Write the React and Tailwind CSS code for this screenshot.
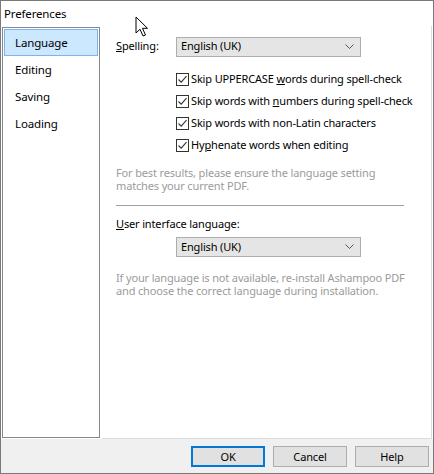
import React from "react";

const font = { fontFamily: '"Noto Sans", "Segoe UI", sans-serif' };

const Check = () => (
  <span className="w-[13px] h-[13px] border border-[#333333] bg-white flex items-center justify-center shrink-0">
    <svg width="11" height="11" viewBox="0 0 11 11">
      <path d="M1.5 5.5 L4.2 8.2 L9.5 2.2" fill="none" stroke="#333" strokeWidth="1.1" />
    </svg>
  </span>
);

const Select = ({ value }) => (
  <div className="w-[185px] h-[20px] border border-[#adadad] bg-[#e5e5e5] flex items-center justify-between pl-[4px] pr-[6px]">
    <span>{value}</span>
    <svg width="9" height="6" viewBox="0 0 9 6">
      <path d="M0.5 0.5 L4.5 4.5 L8.5 0.5" fill="none" stroke="#555" strokeWidth="1" />
    </svg>
  </div>
);

const options = [
  <>Skip UPPERCASE <u>w</u>ords during spell-check</>,
  <>Skip words with <u>n</u>umbers during spell-check</>,
  <>Skip words with non-Latin characters</>,
  <>Hy<u>p</u>henate words when editing</>,
];

const navItems = ["Language", "Editing", "Saving", "Loading"];

export default function App() {
  return (
    <div
      className="w-[434px] h-[474px] border border-[#7a7a7a] bg-white flex flex-col relative text-[11px] tracking-[-0.15px] text-black whitespace-nowrap"
      style={font}
    >
      <div className="h-[25px] pl-[3px] pt-[4px] leading-[18px] text-[11.5px]">Preferences</div>

      <div className="flex flex-1 pl-[1px] pr-[1px]">
        <div className="w-[98px] mt-[1px] h-[411px] border border-[#828790] bg-white flex flex-col pt-[1px] pl-[1px] text-[11.5px]">
          {navItems.map((item, i) => (
            <div
              key={item}
              className={`h-[27px] w-[94px] flex items-center pl-[10px] ${
                i === 0 ? "border border-[#7eb4ea] bg-[#cce8ff]" : "pl-[11px]"
              }`}
            >
              {item}
            </div>
          ))}
        </div>

        <div className="ml-[2px] w-[330px] h-[413px] border-r border-b border-[#dcdcdc] bg-white pl-[14px] pt-[10px]">
          <div className="flex items-center h-[21px]">
            <span className="w-[60px]">
              <u>S</u>pelling:
            </span>
            <Select value="English (UK)" />
          </div>

          <div className="flex flex-col mt-[11px] pl-[60px]">
            {options.map((o, i) => (
              <div key={i} className="h-[22px] flex items-center gap-[2px]">
                <Check />
                <span>{o}</span>
              </div>
            ))}
          </div>

          <div className="mt-[10px] text-[#9b9b9b] leading-[13px]">
            <div>For best results, please ensure the language setting</div>
            <div>matches your current PDF.</div>
          </div>

          <div className="mt-[13px] w-[288px] h-px bg-[#a0a0a0]" />

          <div className="mt-[10px] leading-[16px]">
            <u>U</u>ser interface language:
          </div>

          <div className="mt-[5px] pl-[60px]">
            <Select value="English (UK)" />
          </div>

          <div className="mt-[14px] text-[#9b9b9b] leading-[13px]">
            <div>If your language is not available, re-install Ashampoo PDF</div>
            <div>and choose the correct language during installation.</div>
          </div>
        </div>
      </div>

      <div className="h-[34px] bg-[#f0f0f0] flex justify-end items-start pt-[7px] pr-[4px] gap-[8px]">
        <button className="w-[74px] h-[21px] border-2 border-[#0078d7] bg-[#e1e1e1] leading-none">OK</button>
        <button className="w-[74px] h-[21px] border border-[#adadad] bg-[#e1e1e1] leading-none">Cancel</button>
        <button className="w-[74px] h-[21px] border border-[#adadad] bg-[#e1e1e1] leading-none">Help</button>
      </div>

      <svg className="absolute left-[134px] top-[15px]" width="14" height="22" viewBox="0 0 14 22">
        <path d="M1 1 L1 17 L5 13.2 L8 20 L10.5 19 L7.5 12.3 L12.5 12.3 Z" fill="#fff" stroke="#000" strokeWidth="1" strokeLinejoin="miter" />
      </svg>
    </div>
  );
}
